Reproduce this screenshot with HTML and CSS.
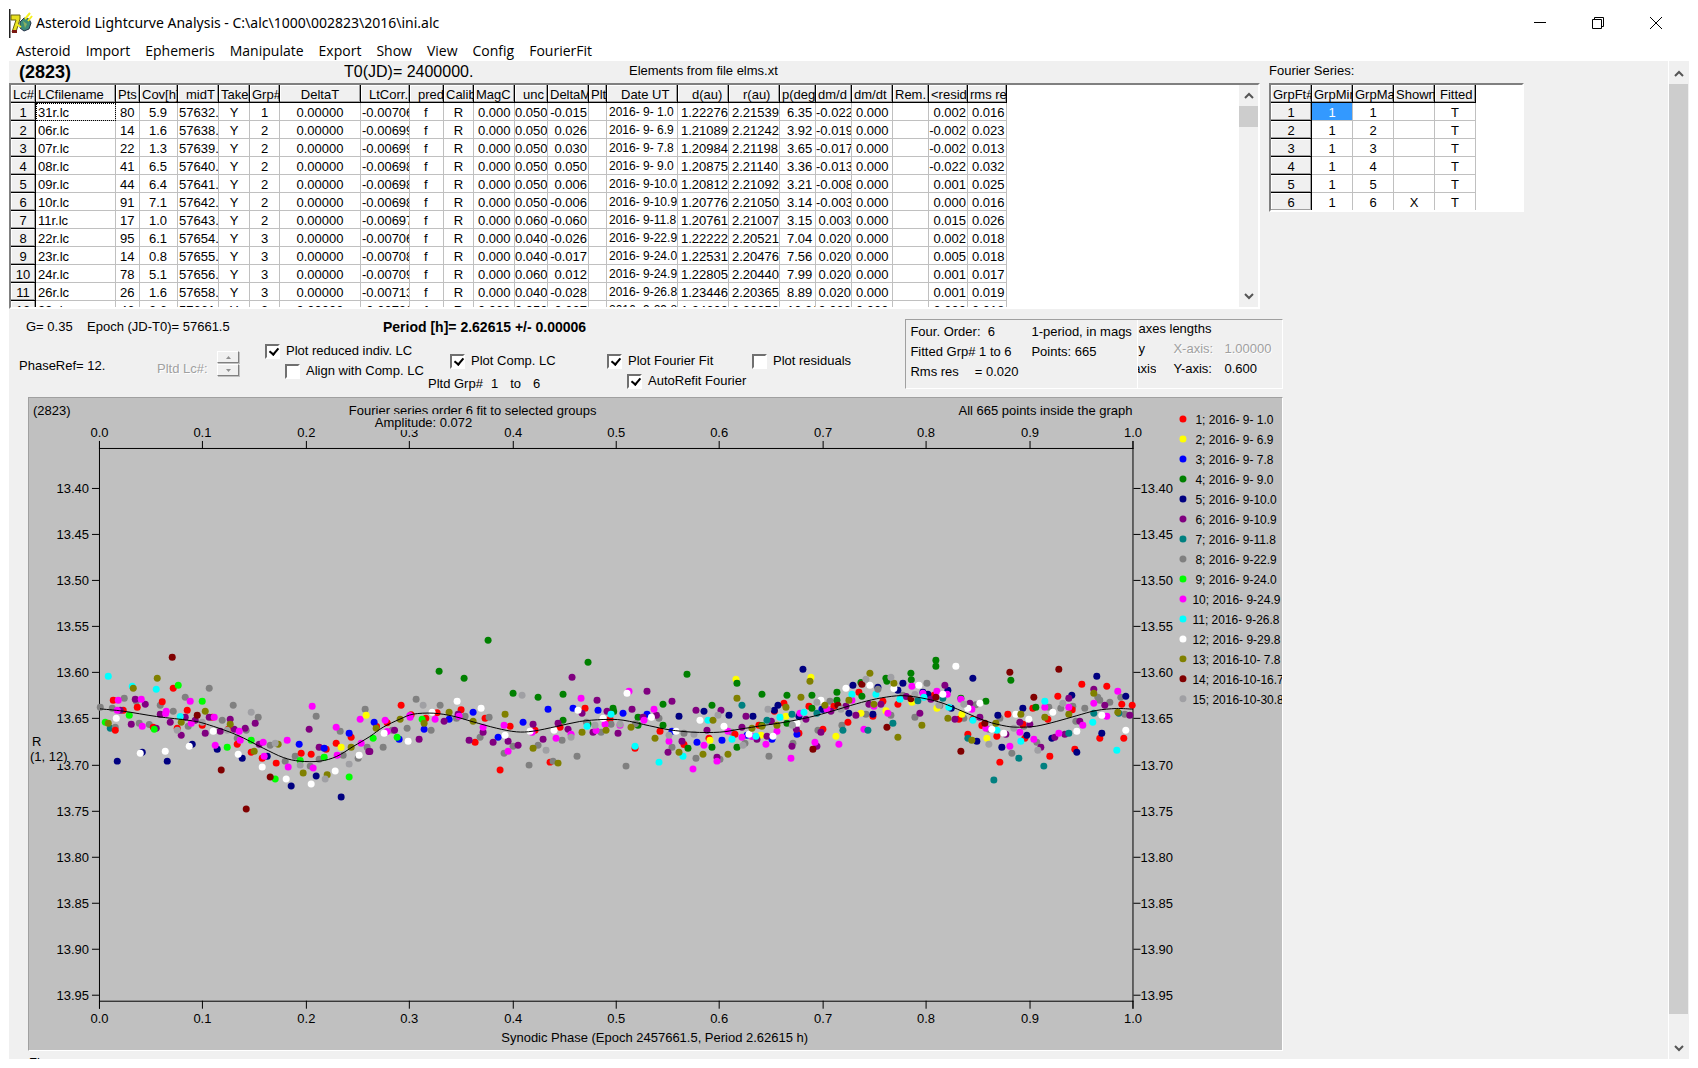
FILE: index.html
```html
<!DOCTYPE html>
<html lang="en">
<head>
<meta charset="utf-8">
<title>Asteroid Lightcurve Analysis</title>
<link rel="stylesheet" href="styles.css">
</head>
<body>
<header class="titlebar">
  <svg class="app-icon" width="24" height="30" viewBox="0 0 24 30" aria-hidden="true">
    <path d="M0.5 0v29" stroke="#222" stroke-width="2"/>
    <path d="M2 6h9v4l-4 13H3l4-12H2z" fill="#e8e020" stroke="#6a6410"/>
    <path d="M3 21h5v3H3z" fill="#7a1810"/>
    <path d="M11 13l4-4 5 1 2 4-2 6-5 2-4-3z" fill="#3c8c78" stroke="#25324a"/>
    <path d="M14 12l4 3-2 4z" fill="#8ab060"/>
    <path d="M16 10l5-6M19 12l4-5M7 15l5 3" stroke="#f4f020" stroke-width="2"/>
  </svg>
  <h1>Asteroid Lightcurve Analysis - C:\alc\1000\002823\2016\ini.alc</h1>
  <div class="window-buttons">
    <button type="button" aria-label="Minimize"><svg width="12" height="12"><path d="M0 5.5h12"/></svg></button>
    <button type="button" aria-label="Restore"><svg width="12" height="12"><path d="M0.5 2.5h9v9h-9zM2.500 2.500v-2h9v9h-2"/></svg></button>
    <button type="button" aria-label="Close"><svg width="12" height="12"><path d="M0 0l12 12M12 0L0 12"/></svg></button>
  </div>
</header>
<nav class="menubar">
  <button type="button">Asteroid</button><button type="button">Import</button><button type="button">Ephemeris</button><button type="button">Manipulate</button><button type="button">Export</button><button type="button">Show</button><button type="button">View</button><button type="button">Config</button><button type="button">FourierFit</button>
</nav>

<main class="client">
  <div class="workspace">
    <section class="tables">
      <div class="lightcurves">
        <div class="heading"><strong>(2823)</strong><span class="epoch">T0(JD)= 2400000.</span><span class="elements">Elements from file elms.xt</span></div>
        <div class="grid-box">
          <div class="grid-view"><table class="grid lc" id="lc"></table></div>
          <div class="scrollbar">
            <svg width="10" height="7"><path d="M1 6l4-4 4 4"/></svg>
            <div class="thumb"></div>
            <svg width="10" height="7"><path d="M1 1l4 4 4-4"/></svg>
          </div>
        </div>
      </div>
      <div class="fourier">
        <div class="heading">Fourier Series:</div>
        <div class="grid-box"><table class="grid fs" id="fs"></table></div>
      </div>
    </section>

    <section class="lower">
      <div class="controls">
        <div class="settings">
          <div class="facts"><span class="g">G= 0.35</span><span class="ep">Epoch (JD-T0)= 57661.5</span><strong>Period [h]= 2.62615 +/- 0.00006</strong></div>
          <div class="options">
            <div class="phase">PhaseRef= 12.</div>
            <div class="plotted"><span>Pltd Lc#:</span>
              <div class="spinner">
                <button type="button" disabled aria-label="Next"><svg width="5" height="3"><path d="M0 3L2.500 0 5 3z"/></svg></button>
                <button type="button" disabled aria-label="Previous"><svg width="5" height="3"><path d="M0 0h5L2.500 3z"/></svg></button>
              </div>
            </div>
            <div class="reduced">
              <label><input type="checkbox" checked>Plot reduced indiv. LC</label>
              <label class="sub"><input type="checkbox">Align with Comp. LC</label>
            </div>
            <div class="comp">
              <label><input type="checkbox" checked>Plot Comp. LC</label>
              <div class="range"><span>Pltd Grp#</span><span>1</span><span>to</span><span>6</span></div>
            </div>
            <div class="fit">
              <label><input type="checkbox" checked>Plot Fourier Fit</label>
              <label class="sub"><input type="checkbox" checked>AutoRefit Fourier</label>
            </div>
            <div class="residuals"><label><input type="checkbox">Plot residuals</label></div>
          </div>
        </div>
        <div class="summary">
          <div class="result">
            <span>Four. Order:&nbsp; 6</span><span>1-period, in mags</span>
            <span>Fitted Grp# 1 to 6</span><span>Points: 665</span>
            <span>Rms res<i></i>= 0.020</span><span></span>
          </div>
          <div class="axes">
            <span class="wide">axes lengths</span>
            <span>y</span><span class="off">X-axis:</span><span class="off">1.00000</span>
            <span class="cut">axis</span><span>Y-axis:</span><span>0.600</span>
          </div>
        </div>
      </div>
      <div class="plot">
        <svg id="chart" viewBox="29 398 1254 652" role="img" aria-label="Composite lightcurve">
          <text x="33" y="415">(2823)</text>
          <text x="349" y="415">Fourier series order 6 fit to selected groups</text>
          <text x="1133" y="415" class="end">All 665 points inside the graph</text>
          <path d="M99.500 441v568M1133.500 441v568M99 448.500h1035M99 1001.500h1035" class="axis"/>
          <g id="ticks"></g>
          <rect x="374" y="414" width="98" height="16" class="mask"/>
          <text x="375" y="427">Amplitude: 0.072</text>
          <text x="32" y="746">R</text>
          <rect x="29" y="749" width="38" height="15" class="mask"/>
          <text x="30" y="761">(1, 12)</text>
          <text x="655" y="1042" class="mid">Synodic Phase (Epoch 2457661.5, Period 2.62615 h)</text>
          <g id="dots"></g>
          <path id="fit" class="axis"/>
          <g id="legend"></g>
        </svg>
      </div>
      <div class="more">Fi</div>
    </section>
  </div>
  <div class="scrollbar main-scroll">
    <svg width="10" height="7"><path d="M1 6l4-4 4 4"/></svg>
    <div class="thumb"></div>
    <svg width="10" height="7"><path d="M1 1l4 4 4-4"/></svg>
  </div>
</main>
<script src="app.js"></script>
</body>
</html>
```
FILE: styles.css
```css
* { box-sizing: border-box; }
body {
  margin: 0;
  height: 100vh;
  padding: 0 9px 9px;
  display: flex;
  flex-direction: column;
  overflow: hidden;
  background: #fff;
  color: #000;
  font: 13px/16px "Liberation Sans", Arial, sans-serif;
}
button { border: 0; background: none; padding: 0; color: inherit; font: inherit; }

.titlebar { display: flex; align-items: flex-start; height: 41px; padding-top: 9px; }
.app-icon { margin-right: 3px; }
.titlebar h1 { flex: 1; margin: 0; font: 14px/28px "Noto Sans", "Segoe UI", sans-serif; }
.window-buttons { display: flex; padding-right: 4px; }
.window-buttons button { width: 58px; height: 28px; }
.window-buttons svg { fill: none; stroke: #000; display: block; margin: 0 auto; }

.menubar { display: flex; gap: 15px; height: 20px; padding-left: 7px; font: 14px/20px "Open Sans", "Segoe UI", sans-serif; }

.client { flex: 1; min-height: 0; display: flex; background: #f0f0f0; }
.workspace { flex: 1; min-width: 0; overflow: hidden; }

.heading { display: flex; align-items: center; height: 22px; white-space: nowrap; }
.heading strong { width: 335px; padding-left: 10px; font-size: 18px; }
.epoch { width: 285px; font-size: 16px; }
.elements { padding-bottom: 3px; }
.tables { display: flex; gap: 9px; }
.lightcurves { flex: 0 1 1251px; min-width: 0; }
.fourier { flex: 0 0 255px; }
.fourier .heading { padding-bottom: 3px; }

.grid-box {
  display: flex;
  background: #fff;
  border: 2px solid;
  border-color: #808080 #fff #fff #808080;
  overflow: hidden;
}
.lightcurves .grid-box { height: 226px; }
.fourier .grid-box { height: 129px; }
.grid-view { flex: 1; min-width: 0; overflow: hidden; }
.grid { table-layout: fixed; border-spacing: 0; width: 0; }
.grid th, .grid td {
  height: 18px;
  padding: 2px 0 0;
  border: solid #c0c0c0;
  border-width: 0 1px 1px 0;
  line-height: 15px;
  font-weight: 400;
  text-align: left;
  white-space: nowrap;
  overflow: hidden;
}
.grid th {
  background: #f0f0f0;
  border-color: #000;
  box-shadow: inset -1px -1px #a0a0a0, inset 1px 1px #fff;
}
.grid thead th { padding-top: 3px; line-height: 14px; }
.grid tbody th { text-align: center; }
.lc tbody tr:first-child td:nth-child(2) { outline: 1px dotted #000; outline-offset: -1px; }
.fs col { width: 41px; }
.fs thead th { text-indent: 2px; }
.fs thead th:last-child { text-indent: 5px; }
.fs td { text-align: center; }
.fs tbody tr:first-child td:nth-child(2) { background: #3399ff; color: #fff; }

.lc col:nth-child(1) { width: 25px; }
.lc col:nth-child(2) { width: 80px; }
.lc col:nth-child(3) { width: 24px; }
.lc col:nth-child(4) { width: 38px; }
.lc col:nth-child(5) { width: 41px; }
.lc col:nth-child(6) { width: 31px; }
.lc col:nth-child(7) { width: 30px; }
.lc col:nth-child(8) { width: 81px; }
.lc col:nth-child(9) { width: 49px; }
.lc col:nth-child(10) { width: 34px; }
.lc col:nth-child(11) { width: 30px; }
.lc col:nth-child(12) { width: 41px; }
.lc col:nth-child(13) { width: 33px; }
.lc col:nth-child(14) { width: 41px; }
.lc col:nth-child(15) { width: 18px; }
.lc col:nth-child(16) { width: 71px; }
.lc col:nth-child(17), .lc col:nth-child(18) { width: 51px; }
.lc col:nth-child(19), .lc col:nth-child(20) { width: 36px; }
.lc col:nth-child(21) { width: 41px; }
.lc col:nth-child(22) { width: 36px; }
.lc col:nth-child(23), .lc col:nth-child(24) { width: 39px; }

.lc th, .lc td { text-indent: 2px; }
.lc tbody th { text-indent: 0; }
.lc th:nth-child(5), .lc th:nth-child(9), .lc th:nth-child(13), .lc th:nth-child(10) { text-indent: 8px; }
.lc th:nth-child(16), .lc th:nth-child(17), .lc th:nth-child(18) { text-indent: 14px; }
.lc th:nth-child(8), .lc td:nth-child(8), .lc td:nth-child(6), .lc td:nth-child(7), .lc td:nth-child(11) { text-align: center; text-indent: 0; }
.lc td:nth-child(3), .lc td:nth-child(12), .lc td:nth-child(21), .lc td:nth-child(24) { text-indent: 4px; }
.lc td:nth-child(17), .lc td:nth-child(18) { text-indent: 3px; }
.lc td:nth-child(4) { text-indent: 9px; }
.lc td:nth-child(19) { text-indent: 7px; }
.lc td:nth-child(9), .lc td:nth-child(5) { text-indent: 1px; }
.lc td:nth-child(13) { text-indent: 0; }
.lc td:nth-child(10) { text-indent: 14px; }
.lc td:nth-child(14), .lc td:nth-child(20), .lc td:nth-child(23) { text-align: right; text-indent: 0; }
.lc td:nth-child(14), .lc td:nth-child(23) { padding-right: 1px; }
.lc td:nth-child(16) { font-size: 12px; }

.scrollbar {
  flex: 0 0 19px;
  display: flex;
  flex-direction: column;
  align-items: center;
  padding: 7px 0;
  background: #f0f0f0;
}
.scrollbar svg { flex: none; fill: none; stroke: #555; stroke-width: 2; }
.scrollbar .thumb { width: 19px; height: 21px; margin: 7px 0 auto; background: #cdcdcd; }
.main-scroll { flex-basis: 20px; border-left: 1px solid #fff; padding: 9px 0 7px; margin-right: 1px; }
.main-scroll .thumb { flex: 1; margin: 7px 0 31px; }

.lower { width: 77%; padding: 10px 3px 0 19px; }
.controls { display: flex; justify-content: space-between; align-items: flex-start; height: 78px; white-space: nowrap; }
.facts { display: flex; margin-left: -2px; }
.facts .g { width: 61px; }
.facts .ep { width: 296px; }
.facts strong { font-size: 14px; }
.settings { flex: 1; min-width: 0; }
.options { display: flex; }
.phase { width: 138px; padding-top: 23px; margin-left: -9px; }
.plotted { width: 108px; display: flex; align-items: flex-start; gap: 6px; padding-top: 16px; color: #a0a0a0; text-shadow: 1px 1px #fff; }
.plotted span { width: 54px; padding-top: 10px; }
.spinner { display: grid; gap: 1px; }
.spinner button { display: flex; justify-content: center; align-items: center; width: 22px; height: 12px; border: 1px solid; border-color: #fff #808080 #808080 #fff; box-shadow: 1px 1px #c0c0c0; }
.spinner svg { fill: #909090; }
.reduced { width: 163px; padding-top: 6px; }
.comp { width: 179px; padding-top: 16px; }
.comp label { padding-left: 22px; }
.fit { width: 145px; padding-top: 16px; }
.residuals { padding-top: 16px; }
.options label { display: flex; align-items: center; gap: 6px; height: 20px; }
.options .sub { padding-left: 20px; }
.options input { appearance: none; flex: none; width: 15px; height: 15px; margin: 0; background: #fff; border: 2px solid; border-color: #707070 #fff #fff #707070; }
.options input:checked::after { content: ""; display: block; width: 4px; height: 7px; margin: 0 0 0 4px; border: solid #000; border-width: 0 2px 2px 0; transform: rotate(40deg); }
.range { display: flex; gap: 12px; padding-top: 5px; }
.range span:nth-child(2) { margin-left: -4px; }

.summary { flex: 0 0 378px; display: flex; height: 70px; border: 1px solid; border-color: #a0a0a0 #fff #fff #a0a0a0; }
.result { display: grid; grid-template-columns: 121px 106px; grid-auto-rows: 20px; padding: 4px 0 0 4px; border-right: 1px solid #fff; }
.result i { display: inline-block; width: 16px; }
.axes { flex: 1; display: grid; grid-template-columns: 35px 51px 1fr; grid-auto-rows: 20px; padding-top: 1px; }
.axes .wide { grid-column: 1 / -1; }
.axes .off { color: #a0a0a0; text-shadow: 1px 1px #fff; }
.axes .cut { display: flex; justify-content: flex-end; width: 18px; overflow: hidden; }

.plot { background: #c0c0c0; border: 1px solid; border-color: #a0a0a0 #fff #fff #a0a0a0; }
.plot svg { display: block; width: 100%; }
.plot text { font-size: 13px; }
.plot #legend text { font-size: 12px; }
.plot .mid { text-anchor: middle; }
.plot .end { text-anchor: end; }
.axis { fill: none; stroke: #000; stroke-width: 1; }
.mask { fill: #c0c0c0; }
.more { padding: 4px 0 0 1px; }
```
FILE: app.js
```js
const headers = ['Lc#','LCfilename','Pts','Cov[h]','midT','Take','Grp#','DeltaT','LtCorr.','pred','Calib','MagC','unc','DeltaM','Plt','Date UT','d(au)','r(au)','p(deg)','dm/d','dm/dt','Rem.','<resid','rms re'];
const rows = `1|31r.lc|80|5.9|57632.|Y|1|0.00000|-0.00706|f|R|0.000|0.050|-0.015||2016- 9- 1.0|1.22276|2.21539|6.35|-0.022|0.000||0.002|0.016
2|06r.lc|14|1.6|57638.|Y|2|0.00000|-0.00699|f|R|0.000|0.050|0.026||2016- 9- 6.9|1.21089|2.21242|3.92|-0.019|0.000||-0.002|0.023
3|07r.lc|22|1.3|57639.|Y|2|0.00000|-0.00699|f|R|0.000|0.050|0.030||2016- 9- 7.8|1.20984|2.21198|3.65|-0.017|0.000||-0.002|0.013
4|08r.lc|41|6.5|57640.|Y|2|0.00000|-0.00698|f|R|0.000|0.050|0.050||2016- 9- 9.0|1.20875|2.21140|3.36|-0.013|0.000||-0.022|0.032
5|09r.lc|44|6.4|57641.|Y|2|0.00000|-0.00698|f|R|0.000|0.050|0.006||2016- 9-10.0|1.20812|2.21092|3.21|-0.008|0.000||0.001|0.025
6|10r.lc|91|7.1|57642.|Y|2|0.00000|-0.00698|f|R|0.000|0.050|-0.006||2016- 9-10.9|1.20776|2.21050|3.14|-0.003|0.000||0.000|0.016
7|11r.lc|17|1.0|57643.|Y|2|0.00000|-0.00697|f|R|0.000|0.060|-0.060||2016- 9-11.8|1.20761|2.21007|3.15|0.003|0.000||0.015|0.026
8|22r.lc|95|6.1|57654.|Y|3|0.00000|-0.00706|f|R|0.000|0.040|-0.026||2016- 9-22.9|1.22222|2.20521|7.04|0.020|0.000||0.002|0.018
9|23r.lc|14|0.8|57655.|Y|3|0.00000|-0.00708|f|R|0.000|0.040|-0.017||2016- 9-24.0|1.22531|2.20476|7.56|0.020|0.000||0.005|0.018
10|24r.lc|78|5.1|57656.|Y|3|0.00000|-0.00709|f|R|0.000|0.060|0.012||2016- 9-24.9|1.22805|2.20440|7.99|0.020|0.000||0.001|0.017
11|26r.lc|26|1.6|57658.|Y|3|0.00000|-0.00713|f|R|0.000|0.040|-0.028||2016- 9-26.8|1.23446|2.20365|8.89|0.020|0.000||0.001|0.019
12|29r.lc|46|2.6|57661.|Y|3|0.00000|-0.00720|f|R|0.000|0.050|-0.027||2016- 9-29.8|1.24600|2.20250|10.26|0.020|0.000||0.000|0.018`.split('\n').map(r => r.split('|'));
const fsHeaders = ['GrpFt#','GrpMin','GrpMax','Shown','Fitted'];
const fsRows = [1,2,3,4,5,6].map(n => [n, 1, n, n === 6 ? 'X' : '', 'T']);

const esc = s => String(s).replace('<', '&lt;');
function fill(id, head, body) {
  document.getElementById(id).innerHTML =
    '<colgroup>' + '<col>'.repeat(head.length) + '</colgroup><thead><tr>' +
    head.map(h => `<th scope="col">${esc(h)}</th>`).join('') + '</tr></thead><tbody>' +
    body.map(r => '<tr>' + r.map((c, i) => i ? `<td>${esc(c)}</td>` : `<th scope="row">${c}</th>`).join('') + '</tr>').join('') + '</tbody>';
}
fill('lc', headers, rows);
fill('fs', fsHeaders, fsRows);

// Axis ticks and labels.
let ticks = '';
for (let i = 0; i <= 10; i++) {
  const x = Math.round(99 + i * 103.4) + 0.5, t = (i / 10).toFixed(1);
  ticks += `<path class="axis" d="M${x} 441v8M${x} 1001v8"/><text class="mid" x="${x}" y="437">${t}</text><text class="mid" x="${x}" y="1023">${t}</text>`;
}
for (let i = 0; i <= 11; i++) {
  const y = Math.round(488 + i * 46.09) + 0.5, t = (13.4 + i * 0.05).toFixed(2);
  ticks += `<path class="axis" d="M92 ${y}h7M1134 ${y}h7"/><text class="end" x="89" y="${y + 4.5}">${t}</text><text x="1141" y="${y + 4.5}">${t}</text>`;
}
document.getElementById('ticks').innerHTML = ticks;

const colors = { r:'#ff0000', y:'#ffff00', b:'#0000ff', g:'#008000', n:'#000080', p:'#800080', t:'#008080', s:'#808080', l:'#00ff00', m:'#ff00ff', c:'#00ffff', w:'#ffffff', o:'#808000', k:'#800000', a:'#a0a0a4' };

// Legend.
const nights = ['r 1; 2016- 9- 1.0','y 2; 2016- 9- 6.9','b 3; 2016- 9- 7.8','g 4; 2016- 9- 9.0','n 5; 2016- 9-10.0','p 6; 2016- 9-10.9','t 7; 2016- 9-11.8','s 8; 2016- 9-22.9','l 9; 2016- 9-24.0','m 10; 2016- 9-24.9','c 11; 2016- 9-26.8','w 12; 2016- 9-29.8','o 13; 2016-10- 7.8','k 14; 2016-10-16.7','a 15; 2016-10-30.8'];
document.getElementById('legend').innerHTML = nights.map((n, i) => {
  const y = 419 + i * 20;
  return `<circle cx="1183.5" cy="${y}" r="3.5" fill="${colors[n[0]]}"/><text x="${i < 9 ? 1196 : 1193}" y="${y + 5}">${n.slice(2)}</text>`;
}).join('');

// Observations in phase blocks; positions are thirds of a unit from the block origin.
const blocks = [
  [90, {
    t:'61,325', s:'103,235 358,205 286,232 139,244 211,256 430,256 31,262 67,265 250,274 76,322 148,310 178,314 295,319 397,301 505,292 469,331 442,355 541,376 586,424 616,409 679,289 661,439 751,334 826,268 760,406 688,418 832,382 805,415',
    r:'250,205 70,241 217,246 142,262 100,271 292,271 76,331 190,322 262,325 337,316 442,373 484,397 517,415 559,430 634,400 664,403 739,370 709,388 784,352 415,328 367,292',
    n:'82,424 157,397 232,424 307,373 382,388 457,415 532,409 604,499 679,469 754,532',
    p:'136,238 166,253 91,271 211,283 286,292 124,313 241,307 199,325 274,346 346,340 358,292 421,298 391,334 433,328 466,325 496,310 508,373 658,328 688,382 837,395 316,301',
    l:'265,196 337,244 46,307 118,286 193,328 484,361 412,382 556,478 631,422 703,412 778,472',
    m:'85,241 154,238 301,244 229,274 227,281 82,271 157,319 304,310 373,292 448,334 451,361 376,376 520,367 523,409 592,361 595,442 670,445 667,259 739,322 811,298 742,406 814,370',
    b:'628,373 703,385 778,340', y:'754,382 829,286', c:'55,169 127,199 199,208 271,290',
    w:'79,295 151,400 226,394 298,379 370,334 445,403 517,442 589,478 664,493 736,454 808,406',
    o:'130,205 202,175 55,310 346,274 274,307 421,313 493,394 565,373 640,460 712,465 784,382',
    k:'247,112 322,286 394,451 469,568 541,472',
    a:'262,331 337,307 412,331 484,277 556,370 631,436 706,478 778,433' }],
  [370, {
    r:'94,256 20,320 52,309 168,295 124,285 202,279 274,270 346,295 316,367 391,451 421,319 496,331 571,322 541,427 646,265 721,298 796,385',
    g:'208,154 283,175 355,61 430,220 505,232 580,223 655,127 730,265 732,275 580,301 655,313 805,292 805,316',
    b:'13,307 88,358 163,328 238,298 310,277 385,352 460,307 535,268 610,265 685,271 760,280 832,283',
    s:'139,238 40,382 67,331 112,325 184,331 211,256 286,289 260,295 358,292 331,352 403,400 430,379 478,436 505,376 550,424 577,361 622,409 694,337 724,313 769,439 650,307 797,312',
    p:'74,331 148,358 223,304 298,361 340,337 370,367 415,364 445,376 490,313 520,358 565,310 595,328 607,172 637,280 682,241 712,274 670,337 745,340 787,268 832,214 265,283 820,292 0,395',
    m:'46,301 52,335 121,292 120,287 196,298 268,289 340,322 403,316 415,394 487,337 559,355 634,235 604,343 706,313 679,332 751,316 778,214 823,301',
    l:'10,355 82,352 157,298', c:'652,319 724,283 796,379',
    w:'43,340 115,364 187,277 262,244 334,265 406,346 481,334 553,331 625,271 700,295 772,220',
    o:'19,325 91,298 163,310 238,277 310,304 406,283 490,385 565,430 637,337 709,331 784,322',
    a:'160,256 457,226 529,391 604,352 676,316 751,313' }],
  [650, {
    s:'28,295 67,382 103,340 139,415 211,418 247,337 286,370 358,409 430,370 505,331 541,244 577,316 649,283 724,286 760,226',
    r:'31,334 103,374 178,355 256,343 328,316 403,250 374,274 448,340 478,259 520,328 553,259 595,307 628,217 670,289 700,244 745,253',
    g:'112,163 40,253 40,316 115,385 187,256 187,382 262,382 337,223 337,317 412,226 412,310 487,226 487,265 562,217 562,241 637,229 634,188 709,175 712,184',
    b:'67,334 142,367 217,361 292,346 367,358 442,343 517,268',
    y:'259,178 484,172 181,361 334,346 409,289 559,349 634,280 709,273',
    n:'460,148 88,289 163,274 238,286 310,289 385,256 374,271 448,289 520,268 598,280 610,196 670,283 685,202 745,211 760,190',
    p:'67,244 55,397 97,364 139,271 172,331 202,412 214,271 277,322 289,289 322,358 352,349 365,304 427,379 440,328 469,298 502,379 514,337 544,274 589,259 619,286 658,253 694,253 770,230 20,286',
    m:'13,268 58,364 130,448 163,376 202,424 235,334 277,352 349,373 382,334 424,415 451,280 496,367 532,268 568,373 607,241 643,328 673,259 715,280 307,350',
    t:'277,256 352,301 427,283 502,280 580,331 655,331 730,310',
    c:'28,427 100,409 175,301 247,358 319,349 391,292 463,277 607,223 679,223 751,238',
    w:'5,292 79,334 151,301 223,319 298,343 370,349 442,310 514,241 589,205 661,196 733,206',
    o:'16,355 88,397 160,403 190,301 235,403 262,235 307,325 337,319 382,316 409,262 454,232 481,184 526,256 598,241 661,160 673,253 733,190 745,352',
    k:'490,388 565,256 637,193 712,322',
    a:'58,346 133,343 205,286 280,376 355,268 428,316 502,247 574,268 649,178 724,172' }],
  [650, { s:'685,208', g:'262,190' }],
  [910, {
    s:'52,190 16,292 91,257 163,295 199,255 238,328 271,295 307,400 343,319 382,367 418,262 454,265 490,259 499,304 526,265 565,232 571,241 601,247 634,232 646,283',
    r:'517,193 592,199 445,229 637,253 668,256 370,265 295,283 190,298 148,298 175,343 262,349 271,427 415,298 346,355 421,409 496,388 571,355 643,355 488,270 217,317 73,226 340,313',
    g:'79,121 79,139 304,181 229,244 379,262 4,160 5,180 154,235',
    n:'190,175 562,169 487,226 649,229 340,265 265,286 202,364 277,382 352,346 427,355 502,397 577,340 115,211 40,217 125,265 55,223',
    y:'7,247 82,265 157,283 232,355',
    p:'106,196 553,208 478,235 181,250 31,280 211,292 136,298 331,307 361,313 394,382 436,352 466,343 511,304 586,256 661,286 64,238 289,343',
    t:'25,243 100,235 175,355 253,481 328,415 403,439 478,340 553,280 628,280',
    m:'7,199 154,238 187,268 229,325 301,379 331,337 373,358 406,262 448,340 478,262 520,316 553,250 592,289 625,214 82,214 113,223 40,220',
    c:'43,232 118,262 190,301 262,331 334,364 406,244 550,307 622,391',
    w:'139,139 28,196 100,223 175,265 211,250 247,328 283,340 319,283 358,298 430,277 502,334 577,286 649,331',
    o:'37,316 115,295 187,361 259,310 334,283 406,292 478,283 553,220 625,277',
    k:'301,157 448,148 373,232 154,394 226,310 79,232 4,237',
    a:'16,224 88,256 163,253 238,373 313,325 385,391 460,250' }]
];
let dots = '';
for (const [x0, groups] of blocks)
  for (const k in groups)
    for (const p of groups[k].split(' ')) {
      const [x, y] = p.split(',').map(Number);
      dots += `<circle cx="${(x0 + x / 3).toFixed(1)}" cy="${(620 + y / 3).toFixed(1)}" r="3.5" fill="${colors[k]}"/>`;
    }
document.getElementById('dots').innerHTML = dots;

// Fitted curve, drawn as a smooth path through its nodes.
const nodes = [
  [90, '30,267 100,274 200,290 300,302 350,313 440,345 520,385 580,413 630,424 690,424 740,410 790,380'],
  [370, '0,350 40,322 90,298 130,283 190,280 250,289 310,306 380,325 440,336 490,334 560,320 630,305 700,299 760,301'],
  [650, '0,318 60,330 130,337 210,337 270,328 340,317 400,308 480,292 550,273 620,252 680,237 740,228'],
  [910, '0,229 50,237 100,250 160,275 230,304 290,319 330,322 380,319 440,305 500,288 560,272 620,266 670,268']
].flatMap(([x0, s]) => s.split(' ').map(p => { const [x, y] = p.split(',').map(Number); return [x0 + x / 3, 620 + y / 3]; }));
let d = `M${nodes[0]}`;
for (let i = 0; i < nodes.length - 1; i++) {
  const a = nodes[Math.max(i - 1, 0)], b = nodes[i], c = nodes[i + 1], e = nodes[Math.min(i + 2, nodes.length - 1)];
  d += `C${b[0] + (c[0] - a[0]) / 6} ${b[1] + (c[1] - a[1]) / 6} ${c[0] - (e[0] - b[0]) / 6} ${c[1] - (e[1] - b[1]) / 6} ${c[0]} ${c[1]}`;
}
document.getElementById('fit').setAttribute('d', d);
```
